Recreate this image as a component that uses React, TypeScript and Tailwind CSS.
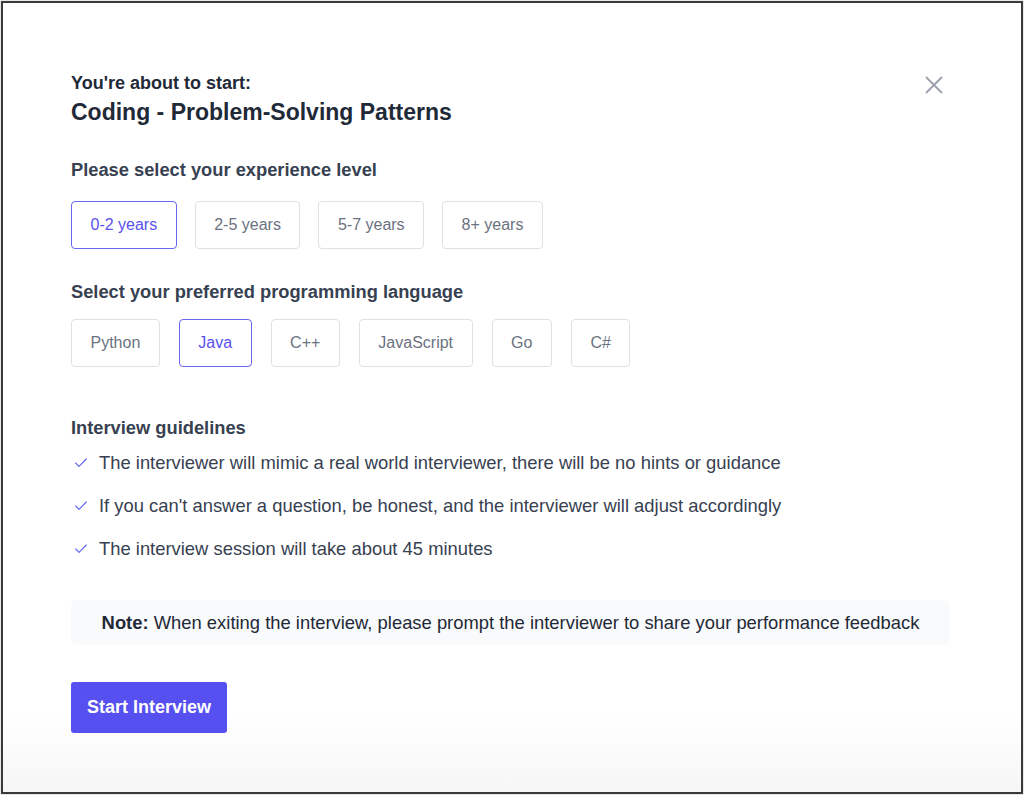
import { Check, X } from "lucide-react";

// ─── Start-interview dialog ───────────────────────────────────────────────────

const LEVELS = ["0-2 years", "2-5 years", "5-7 years", "8+ years"];
const LANGS = ["Python", "Java", "C++", "JavaScript", "Go", "C#"];
const GUIDELINES = [
  "The interviewer will mimic a real world interviewer, there will be no hints or guidance",
  "If you can't answer a question, be honest, and the interviewer will adjust accordingly",
  "The interview session will take about 45 minutes",
];

function Chip({ label, active }: { label: string; active?: boolean }) {
  return (
    <button
      className={[
        "h-[48px] px-[18.5px] rounded-[4px] border text-[16px] bg-white",
        active ? "border-[#6b66f0] text-[#5851ec]" : "border-[#dfe1e6] text-[#6b7280]",
      ].join(" ")}
    >
      {label}
    </button>
  );
}

export default function App() {
  return (
    <div
      className="w-[1024px] h-[795px] bg-[#e8e8e8] p-px"
      style={{ fontFamily: '"Liberation Sans", Arial, sans-serif' }}
    >
      <div className="h-full border-2 border-[#3a3a3a] bg-gradient-to-b from-white from-[90%] to-[#f6f6f6] pl-[68px] pr-[70px] pt-[69px]">
        {/* ── Header ── */}
        <div className="flex items-start justify-between">
          <div>
            <p className="text-[18px] font-bold text-[#1f2937] leading-[22px]">You're about to start:</p>
            <h1 className="mt-[4px] text-[23px] font-bold text-[#1f2937] leading-[28px]">
              Coding - Problem-Solving Patterns
            </h1>
          </div>
          <button className="mt-[-2px] mr-[2px] text-[#9ca3af]">
            <X size={30} strokeWidth={1.5} />
          </button>
        </div>

        {/* ── Experience ── */}
        <h2 className="mt-[33px] text-[18.3px] font-bold text-[#374151] leading-[22px]">
          Please select your experience level
        </h2>
        <div className="mt-[20px] flex gap-[18px]">
          {LEVELS.map((l, i) => (
            <Chip key={l} label={l} active={i === 0} />
          ))}
        </div>

        {/* ── Language ── */}
        <h2 className="mt-[32px] text-[18.3px] font-bold text-[#374151] leading-[22px]">
          Select your preferred programming language
        </h2>
        <div className="mt-[16px] flex gap-[19px]">
          {LANGS.map((l) => (
            <Chip key={l} label={l} active={l === "Java"} />
          ))}
        </div>

        {/* ── Guidelines ── */}
        <h2 className="mt-[50px] text-[18.3px] font-bold text-[#374151] leading-[22px]">
          Interview guidelines
        </h2>
        <ul className="mt-[13px] flex flex-col gap-[21px]">
          {GUIDELINES.map((g) => (
            <li key={g} className="flex items-center gap-[10px] text-[18.4px] text-[#374151] leading-[22px]">
              <Check size={16} strokeWidth={1.75} className="ml-[2px] text-[#6366f1]" />
              {g}
            </li>
          ))}
        </ul>

        {/* ── Note ── */}
        <div className="mt-[40px] w-[879px] h-[45px] rounded-[6px] bg-[#f9fafb] flex items-center justify-center text-[18.4px] text-[#1f2937]">
          <span>
            <span className="font-bold">Note:</span> When exiting the interview, please prompt the interviewer to share your performance feedback
          </span>
        </div>

        <button className="mt-[37px] w-[156px] h-[51px] rounded-[3px] bg-[#5550ef] text-white text-[18px] font-bold">
          Start Interview
        </button>
      </div>
    </div>
  );
}
